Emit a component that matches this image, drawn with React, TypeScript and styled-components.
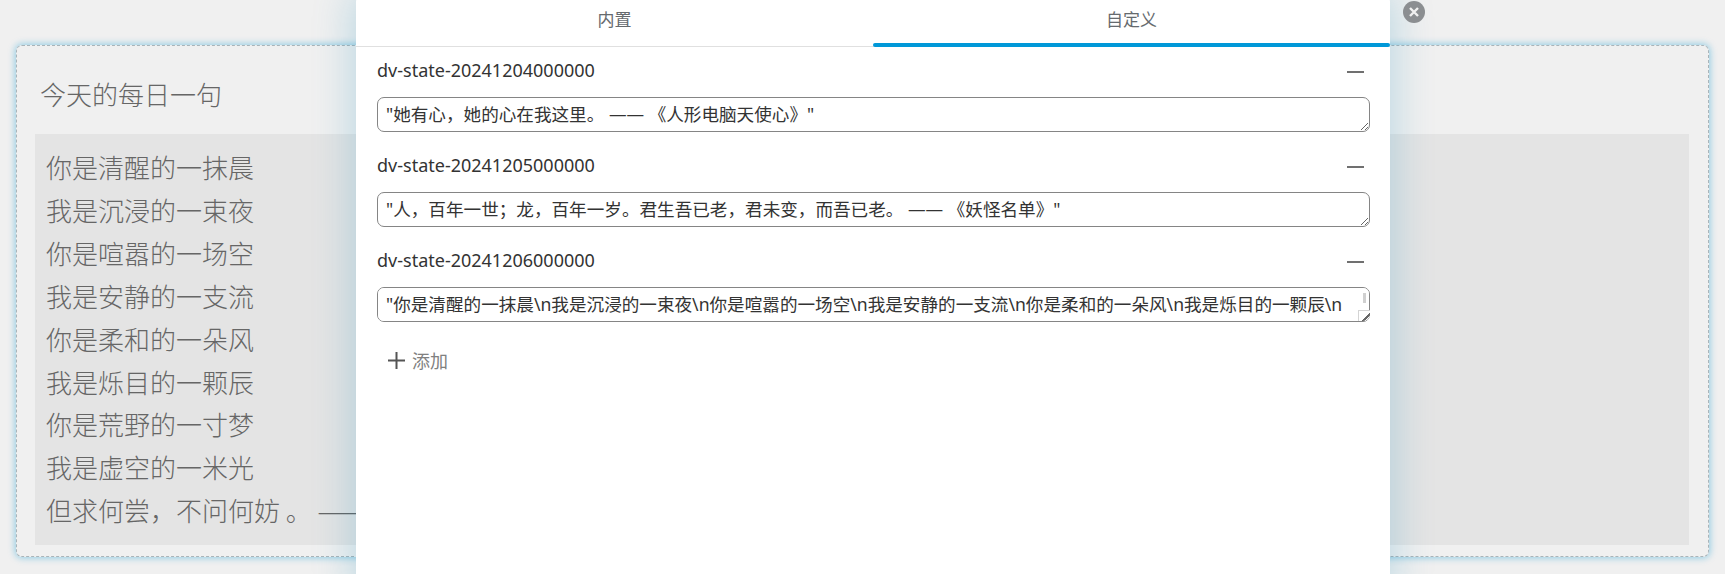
import { FC } from 'react';
import styled, { createGlobalStyle } from 'styled-components';

const cjk = '"Noto Sans CJK SC", sans-serif';
const body = `"Noto Sans", ${cjk}`;

const GlobalStyle = createGlobalStyle`
html, body {
  margin: 0;
  padding: 0;
  width: 100%;
  height: 574px;
  overflow: hidden;
  background: #f0f0f0;
}
`;

const Page = styled.div`
  position: relative;
  width: 1725px;
  height: 574px;
  overflow: hidden;
  padding: 45px 16px 17px;
  box-sizing: border-box;
  font-family: ${cjk};
`;

const Card = styled.section`
  height: 100%;
  box-sizing: border-box;
  padding: 28px 19px 11px 18px;
  border: 1px dashed #a9b4b9;
  border-radius: 6px;
  box-shadow: 0 0 7px 1px rgba(0, 150, 210, 0.4);
  display: flex;
  flex-direction: column;
`;

const CardTitle = styled.h2`
  margin: 0 0 20px 5px;
  font-size: 26px;
  line-height: 40px;
  font-weight: 300;
  color: #666;
`;

const Poem = styled.div`
  flex: 1;
  background: #e4e4e4;
  padding: 12px 11px 0;
  font-size: 26px;
  line-height: 42.9px;
  font-weight: 300;
  color: #666;
`;

const Drawer = styled.aside`
  position: absolute;
  left: 356px;
  top: -6px;
  width: 1034px;
  height: 600px;
  background: #fff;
  border-radius: 8px;
  box-shadow: 0 0 40px 4px rgba(0, 130, 180, 0.22);
  font-family: ${body};
  display: flex;
  flex-direction: column;
`;

const CloseButton = styled.button`
  position: absolute;
  left: 1403px;
  top: 1px;
  width: 22px;
  height: 22px;
  padding: 0;
  border: 0;
  border-radius: 50%;
  background: #8b8e91;
  display: flex;
  align-items: center;
  justify-content: center;
`;

const Tabs = styled.div`
  display: flex;
  height: 53px;
  box-sizing: border-box;
  padding-top: 12px;
  border-bottom: 1px solid #e0e0e0;
`;

const Tab = styled.div<{ $active?: boolean }>`
  flex: 1;
  text-align: center;
  font-size: 17px;
  line-height: 28px;
  color: #666a6e;
  position: relative;
  &::after {
    content: '';
    display: ${(p) => (p.$active ? 'block' : 'none')};
    position: absolute;
    left: 0;
    right: 0;
    bottom: -1px;
    height: 4px;
    border-radius: 2px;
    background: #0098d8;
  }
`;

const List = styled.div`
  padding: 9px 20px 0 21px;
  display: flex;
  flex-direction: column;
`;

const Entry = styled.div`
  display: flex;
  flex-direction: column;
  height: 95px;
`;

const EntryHead = styled.div`
  display: flex;
  align-items: center;
  justify-content: space-between;
  height: 28px;
  margin-bottom: 13px;
  font-size: 18px;
  color: #333;
`;

const RemoveIcon = styled.span`
  display: block;
  width: 17px;
  height: 2px;
  margin: 4px 6px 0 0;
  background: #707070;
`;

const InputFrame = styled.div`
  position: relative;
  width: 993px;
  height: 35px;
`;

const ValueInput = styled.textarea<{ $overflowing?: boolean }>`
  display: block;
  box-sizing: border-box;
  width: 100%;
  height: 100%;
  padding: 3px ${(p) => (p.$overflowing ? '20px' : '8px')} 3px 8px;
  border: 1px solid #858585;
  border-radius: 7px;
  outline: none;
  background: #fff;
  font-family: ${body};
  font-size: 17.6px;
  line-height: 27px;
  color: #333;
  resize: both;
  overflow: auto;
`;

const ScrollThumb = styled.span`
  position: absolute;
  right: 4px;
  top: 6px;
  width: 3px;
  height: 10px;
  background: #d0d0d0;
`;

const ScrollCorner = styled.span`
  position: absolute;
  right: 0;
  bottom: 1px;
  width: 12px;
  height: 11px;
  box-sizing: border-box;
  border: 1px solid #d4d4d4;
  border-right: 0;
  border-bottom: 0;
  border-radius: 0 0 7px 0;
  background: linear-gradient(135deg, #fff 60%, #666 60%, #666 74%, #fff 74%);
`;

const AddButton = styled.div`
  display: flex;
  align-items: center;
  gap: 7px;
  margin: 4px 0 0 11px;
  height: 30px;
  font-size: 18px;
  color: #808080;
`;

type EntryModel = { id: string; value: string; overflowing?: boolean };

const entries: EntryModel[] = [
  { id: 'dv-state-20241204000000', value: '"她有心，她的心在我这里。 —— 《人形电脑天使心》"' },
  { id: 'dv-state-20241205000000', value: '"人，百年一世；龙，百年一岁。君生吾已老，君未变，而吾已老。 —— 《妖怪名单》"' },
  {
    id: 'dv-state-20241206000000',
    overflowing: true,
    value:
      '"你是清醒的一抹晨\\n我是沉浸的一束夜\\n你是喧嚣的一场空\\n我是安静的一支流\\n你是柔和的一朵风\\n我是烁目的一颗辰\\n你是荒野的一寸梦\\n我是虚空的一米光\\n但求何尝，不问何妨 。 ——"',
  },
];

const poem = ['你是清醒的一抹晨', '我是沉浸的一束夜', '你是喧嚣的一场空', '我是安静的一支流', '你是柔和的一朵风', '我是烁目的一颗辰', '你是荒野的一寸梦', '我是虚空的一米光', '但求何尝，不问何妨 。 ——'];

const App: FC = () => (
  <Page>
    <GlobalStyle />
    <Card>
      <CardTitle>今天的每日一句</CardTitle>
      <Poem>
        {poem.map((line) => (
          <div key={line}>{line}</div>
        ))}
      </Poem>
    </Card>
    <Drawer>
      <Tabs>
        <Tab>内置</Tab>
        <Tab $active>自定义</Tab>
      </Tabs>
      <List>
        {entries.map((entry) => (
          <Entry key={entry.id}>
            <EntryHead>
              {entry.id}
              <RemoveIcon />
            </EntryHead>
            <InputFrame>
              <ValueInput readOnly value={entry.value} $overflowing={entry.overflowing} />
              {entry.overflowing && (
                <>
                  <ScrollThumb />
                  <ScrollCorner />
                </>
              )}
            </InputFrame>
          </Entry>
        ))}
        <AddButton>
          <svg width="17" height="17" viewBox="0 0 17 17">
            <path d="M0 8.5h17M8.5 0v17" stroke="#555" strokeWidth="2" fill="none" />
          </svg>
          添加
        </AddButton>
      </List>
    </Drawer>
    <CloseButton aria-label="close">
      <svg width="12" height="12" viewBox="0 0 12 12">
        <path d="M2 2l8 8M10 2l-8 8" stroke="#f0f0f0" strokeWidth="2.4" fill="none" />
      </svg>
    </CloseButton>
  </Page>
);

export default App;
